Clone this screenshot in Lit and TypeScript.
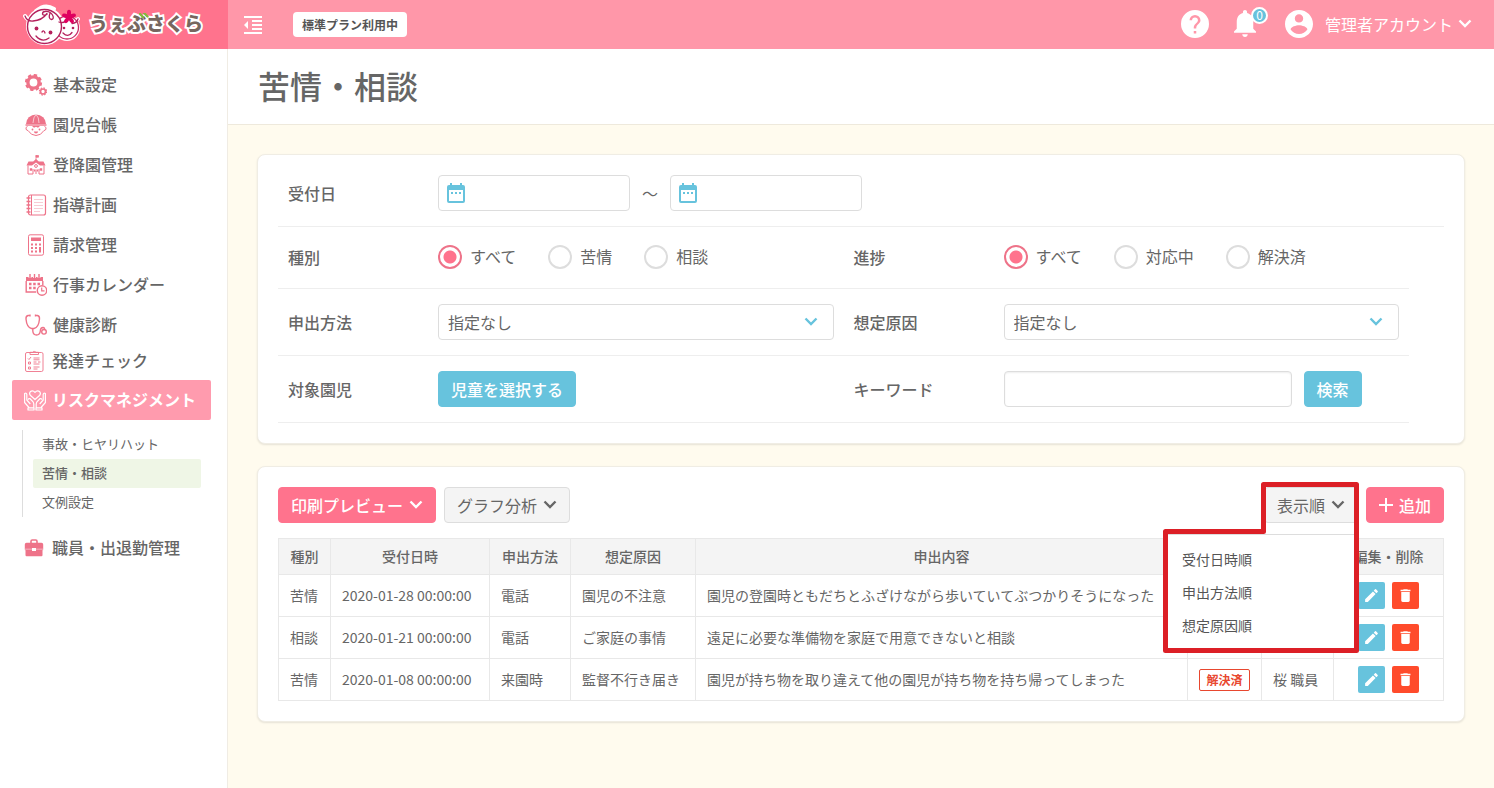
import { LitElement, html, css, svg, nothing } from "lit";
import { customElement, property } from "lit/decorators.js";
import { classMap } from "lit/directives/class-map.js";

const chevron = html`<svg class="chevron" viewBox="0 0 14 10" aria-hidden="true"><path d="M1.500 1.500l5.500 5.500L12.500 1.500" fill="none" stroke="currentColor" stroke-width="2.400"/></svg>`;

const art: Record<string, unknown> = {
  gears: svg`<g fill="none" stroke="currentColor"><circle cx="8.500" cy="8.500" r="5.600" stroke-width="3.400"/><circle cx="8.500" cy="8.500" r="7.600" stroke-width="2" stroke-dasharray="3.400 2.570"/><circle cx="18" cy="17.500" r="2.500" stroke-width="1.700"/><circle cx="18" cy="17.500" r="3.600" stroke-width="1.200" stroke-dasharray="1.500 1.330"/></g>`,
  child: svg`<path d="M1 10a10 9.500 0 0 1 20 0z" fill="currentColor"/><path d="M8 9q.3-6 3-8.500Q14 3 14 9" fill="none" stroke="#fff" stroke-width=".6"/><path d="M.5 11h21" stroke="currentColor" stroke-width="1.400"/><path d="M2.500 12.500q-2 .5-1.500 2.500.5 1.500 2 1.500Q6 21.500 11 21.500t8-5q1.500 0 2-1.500.5-2-1.500-2.500" fill="none" stroke="currentColor"/><path d="M7 12h8l-2 1.800-2-1-2 1z" fill="currentColor"/><circle cx="7.500" cy="15.500" r=".9" fill="currentColor"/><circle cx="14.500" cy="15.500" r=".9" fill="currentColor"/><path d="M8.800 17.500h4.400q-.5 2-2.200 2t-2.200-2z" fill="currentColor"/>`,
  school: svg`<path d="M11 1v5M11 1.500h2.500v1.700H11z" stroke="currentColor" fill="currentColor" stroke-width=".8"/><path d="M3.500 7.500h4.700L11 5l2.800 2.500h4.700l2 4h-5.500L11 8.500 7 11.500H1.500z" fill="currentColor"/><g fill="none" stroke="currentColor"><path d="M3 11.500v8.500h5M19 11.500v8.500h-5M8 20v-5M14 20v-5M11 15.500V20"/><circle cx="11" cy="12" r="1.400"/></g><path d="M4.800 14.200h2.400v2.600H4.800zM14.800 14.200h2.400v2.600h-2.400zM9 15.500h1.300v2H9zM11.800 15.500h1.300v2h-1.300z" fill="currentColor"/>`,
  notebook: svg`<rect x="3.500" y="1" width="17" height="20" rx="2" fill="none" stroke="currentColor" stroke-width="1.200"/><path d="M6.500 1v20" stroke="currentColor"/><path d="M1.500 4h4M1.500 7.500h4M1.500 11h4M1.500 14.500h4M1.500 18h4" stroke="currentColor" stroke-width="1.300"/><path d="M9 5.500h9M9 8.500h9M9 11.500h9M9 14.500h9M9 17.500h6" stroke="currentColor" opacity=".45" stroke-width=".8"/>`,
  calculator: svg`<rect x="3.500" y=".8" width="15" height="20.400" rx="1.600" fill="none" stroke="currentColor" stroke-width="1"/><path d="M6 3.500h10v3.500H6z" fill="currentColor"/><path d="M6 10.500h2M10 10.500h2M14 10.500h2M6 14h2M10 14h2M6 17.500h2M10 17.500h2" stroke="currentColor" stroke-width="1.800"/><path d="M14 13h2v5.500h-2z" fill="currentColor"/>`,
  calendar: svg`<path d="M1 3h17v4H1z" fill="currentColor"/><path d="M1.200 7v11h10M17.800 7v4" fill="none" stroke="currentColor" stroke-width="1.400"/><path d="M5 0v4M9.500 0v4M14 0v4" stroke="#fff" stroke-width="2.800"/><path d="M5 0v4M9.500 0v4M14 0v4" stroke="currentColor" stroke-width="1.400"/><path d="M4 10h2.500M8.200 10h2.500M12.500 10H15M4 14h2.500M8.200 14h2.500" stroke="currentColor" stroke-width="2.400"/><circle cx="17" cy="16.500" r="4.700" fill="#fff" stroke="currentColor" stroke-width="1.400"/><path d="M16.700 13.500v3.300h2.800" fill="none" stroke="currentColor" stroke-width="1.200"/>`,
  stethoscope: svg`<g fill="none" stroke="currentColor" stroke-width="1.400"><path d="M5 1.500H3Q.8 2 1 5q.8 8.500 5.500 9.500h2.500q4.700-1 5.500-9.500.2-3-2-3.500h-2M5 .5v2M10.500 .5v2"/><path d="M7.800 14.500v2.500q.3 4 3.700 4t3.800-4q.2-3.500 2.700-3.500 2 .2 1.500 2"/><circle cx="19" cy="17.800" r="2.300"/></g>`,
  checklist: svg`<g fill="none" stroke="currentColor" stroke-width=".9"><rect x="1.500" y="2.500" width="17.500" height="19" rx="1.500"/><path d="M6 4.500h8.500V2.300H12a2 1.700 0 0 0-3.500 0H6z"/><path d="M4 8.500l1 1 2-2.500M4.500 12h2v2h-2zM4.500 17h2v2h-2z"/><path d="M9.500 8h6M9.500 9.800h6M9.500 12h3M14 12h2.500M9.500 14h6M9.500 17h6M9.500 19h4"/></g>`,
  hands: svg`<g fill="none" stroke="currentColor" stroke-width="1.200" stroke-linejoin="round"><path d="M11 10.500L6.500 6.500q-1.800-2.200 0-4Q8.800 .8 11 3.300 13.200 .8 15.500 2.500q1.800 1.800 0 4z"/><path d="M5 18.500l-4.400-5V4.500q1.800-1 2.200.8V11l3.500 4M9.800 19v-4q-.2-2-1.500-3L5.800 9.500q-1.600-.2-1.500 1.300M17 18.500l4.400-5V4.500q-1.800-1-2.200.8V11l-3.500 4M12.200 19v-4q.2-2 1.500-3l2.500-2.500q1.600-.2 1.500 1.300M4 18.800h6v2.200H4zM12 18.800h6v2.200h-6z"/></g>`,
  briefcase: svg`<path d="M7 6V4.200q0-1.200 1.200-1.200h3.600q1.200 0 1.200 1.200V6" fill="none" stroke="currentColor" stroke-width="1.600"/><path d="M2.500 5.800h15q1.700 0 1.700 1.700v4.300H.8V7.500q0-1.700 1.700-1.700zM1.500 13h17V18q0 1.200-1 1.200h-15q-1 0-1-1.200z" fill="currentColor"/><path d="M.8 11.500h18.400v1.700H.8z" fill="currentColor" opacity=".7"/><path d="M8 11h4v3H8z" fill="#fff"/>`,
};

const base = css`
  :host { font-family: "Noto Sans CJK JP", sans-serif; color: #666; font-size: 16px; line-height: 24px; }
  *, *::before, *::after { box-sizing: border-box; }
  svg { display: block; flex: none; }
  button, input, select { font: inherit; color: inherit; margin: 0; }
  a { color: inherit; text-decoration: none; }
  .chevron { width: 14px; height: 10px; }
`;

@customElement("app-header")
class AppHeader extends LitElement {
  static styles = [base, css`
    :host { display: block; }
    header { display: flex; height: 49px; background: #ff97a9; color: #fff; }
    .brand { display: flex; align-items: center; gap: 8px; width: 228px; padding-left: 22px; background: #ff738d; }
    .face { width: 59px; height: 42px; }
    .name { position: relative; padding-bottom: 4px; font-size: 19px; font-weight: 900; color: #77665f; -webkit-text-stroke: 4px #fff; paint-order: stroke fill; }
    .leaf { position: absolute; left: 50px; top: 2px; }
    .bar { flex: 1; display: flex; align-items: center; padding: 0 22px 0 13px; }
    .icon { display: flex; padding: 0; border: 0; background: none; color: #fff; cursor: pointer; }
    .plan { margin-left: 28px; padding: 0 9px; border-radius: 4px; background: #fff; color: #555; font-size: 12px; font-weight: 700; line-height: 25px; }
    .right { display: flex; align-items: center; margin-left: auto; padding-bottom: 2px; }
    .bell { position: relative; margin: 0 29px 0 25px; }
    .count { position: absolute; left: 17px; top: -3px; width: 17px; height: 17px; border: 2px solid #fff; border-radius: 50%; background: #67c2dc; font-size: 12px; line-height: 12px; text-align: center; }
    .account { display: flex; align-items: center; gap: 12px; padding: 0; border: 0; background: none; color: #fff; cursor: pointer; }
    .user { display: flex; align-items: center; gap: 5px; }
  `];
  render() {
    return html`<header>
      <a class="brand" href="#">
        <svg class="face" viewBox="0 0 59 42" aria-hidden="true">
          <g stroke="#fff" stroke-width="4" stroke-linecap="round" fill="#fff"><circle cx="23" cy="22" r="17"/><circle cx="45" cy="24" r="11"/><path d="M3 12q2 4 6 4M56 15l-4 3M14 7Q23-1 32 5" fill="none"/></g>
          <circle cx="45" cy="23.500" r="11.500" fill="#fff" stroke="#c92b68" stroke-width="1.300"/>
          <circle cx="22.500" cy="22.500" r="17" fill="#fff" stroke="#b4215c" stroke-width="1.400"/>
          <path d="M3 12q2 5.500 8 5 9-.5 14-7.500M28 9q-2 6 1.500 6.500 3-.5 1-4.500-2.500-4-7.500-3.500-2.500 0-2.500 2.500.5 2 4.500.5M56 15q-1 4-6 4.500M37 18q4 2 8-2" fill="none" stroke="#b4215c" stroke-width="1.300" stroke-linecap="round"/>
          <g fill="#b4215c"><circle cx="14.500" cy="24.500" r="1.900"/><circle cx="28.500" cy="28.500" r="1.900"/><circle cx="42" cy="24" r="1.300"/><circle cx="51" cy="24" r="1.300"/></g>
          <path d="M20 28q2-2.500 3 1M14 32q6 7 13 2M41 29q5 5 9-.5" fill="none" stroke="#b4215c" stroke-width="1.300" stroke-linecap="round"/>
          <g fill="#df005f"><circle cx="47" cy="13" r="3"/><ellipse cx="47" cy="9" rx="2" ry="3.200"/><ellipse cx="47" cy="9" rx="2" ry="3.200" transform="rotate(72 47 13)"/><ellipse cx="47" cy="9" rx="2" ry="3.200" transform="rotate(144 47 13)"/><ellipse cx="47" cy="9" rx="2" ry="3.200" transform="rotate(216 47 13)"/><ellipse cx="47" cy="9" rx="2" ry="3.200" transform="rotate(288 47 13)"/></g>
        </svg>
        <span class="name">うぇぶさくら<svg class="leaf" width="10" height="6" viewBox="0 0 10 6" aria-hidden="true"><path d="M1 1l3 3M5 0l3.500 3.500" stroke="#83b93c" stroke-width="2.400" stroke-linecap="round"/></svg></span>
      </a>
      <div class="bar">
        <button class="icon" aria-label="メニューを閉じる"><svg width="24" height="24" viewBox="0 0 24 24" fill="currentColor"><path d="M11 17h10v-2H11v2zm-8-5l4 4V8l-4 4zm0 9h18v-2H3v2zM3 3v2h18V3H3zm8 6h10V7H11v2zm0 4h10v-2H11v2z"/></svg></button>
        <span class="plan">標準プラン利用中</span>
        <div class="right">
          <button class="icon" aria-label="ヘルプ"><svg width="28" height="28" viewBox="2 2 20 20" fill="currentColor"><path d="M12 2a10 10 0 1 0 0 20 10 10 0 0 0 0-20zm.9 16.800h-1.800V17h1.800v1.800zm1.900-7.100l-.9.900c-.7.700-1 1.300-1 2.700h-1.800v-.5c0-1.100.4-2.100 1.200-2.800l1.200-1.300c.4-.3.600-.8.600-1.300a2.100 2.100 0 0 0-4.200 0H8.100a3.900 3.900 0 0 1 7.800 0c0 .9-.4 1.700-1.100 2.300z"/></svg></button>
          <button class="icon bell" aria-label="お知らせ"><svg width="22" height="27" viewBox="4 2.500 16 19.500" fill="currentColor"><path d="M12 22c1.100 0 2-.9 2-2h-4c0 1.100.9 2 2 2zm6-6v-5c0-3.070-1.640-5.640-4.500-6.320V4c0-.83-.67-1.500-1.500-1.500s-1.500.67-1.500 1.500v.68C7.630 5.360 6 7.920 6 11v5l-2 2v1h16v-1l-2-2z"/></svg><span class="count">0</span></button>
          <button class="account">
            <svg width="28" height="28" viewBox="2 2 20 20" fill="currentColor"><path d="M12 2C6.480 2 2 6.480 2 12s4.480 10 10 10 10-4.480 10-10S17.520 2 12 2zm0 3c1.660 0 3 1.340 3 3s-1.340 3-3 3-3-1.340-3-3 1.340-3 3-3zm0 14.200c-2.500 0-4.710-1.280-6-3.220.03-1.990 4-3.080 6-3.080 1.990 0 5.970 1.090 6 3.080-1.290 1.940-3.500 3.220-6 3.220z"/></svg>
            <span class="user">管理者アカウント${chevron}</span>
          </button>
        </div>
      </div>
    </header>`;
  }
}

@customElement("app-sidebar")
class AppSidebar extends LitElement {
  static styles = [base, css`
    :host { display: block; width: 228px; flex: none; background: #fff; border-right: 1px solid #f0ece4; }
    nav { padding: 16px 16px 16px 12px; }
    ul { list-style: none; margin: 0; padding: 0; }
    .item { display: flex; align-items: center; gap: 6px; height: 40px; padding-left: 13px; font-weight: 500; border-radius: 2px; white-space: nowrap; }
    .item span { padding-bottom: 2px; }
    .item svg { width: 22px; height: 22px; color: #ee7389; }
    .compact { height: 32px; margin-bottom: 3px; }
    .active { background: #ff9bae; color: #fff; font-weight: 700; }
    .compact, .active, .last { padding-left: 12px; }
    .item.active svg { color: #fff; }
    .sub { margin: 10px 10px 11px 10px; padding-left: 10px; border-left: 1px solid #ddd; font-size: 13px; }
    .sub a { display: block; padding: 0 0 2px 9px; line-height: 27px; border-radius: 2px; }
    .sub .current { background: #eff6e6; font-weight: 500; }
  `];
  private items = [
    ["gears", "基本設定"], ["child", "園児台帳"], ["school", "登降園管理"], ["notebook", "指導計画"],
    ["calculator", "請求管理"], ["calendar", "行事カレンダー"], ["stethoscope", "健康診断"],
    ["checklist", "発達チェック"], ["hands", "リスクマネジメント"], ["briefcase", "職員・出退勤管理"],
  ];
  render() {
    return html`<nav><ul>${this.items.map(([icon, label]) => html`<li>
      <a href="#" class=${classMap({ item: true, compact: icon === "checklist", active: icon === "hands", last: icon === "briefcase" })}>
        <svg viewBox="0 0 22 22" aria-hidden="true">${art[icon]}</svg><span>${label}</span></a>
      ${icon === "hands" ? html`<ul class="sub">
        <li><a href="#">事故・ヒヤリハット</a></li>
        <li><a href="#" class="current">苦情・相談</a></li>
        <li><a href="#">文例設定</a></li></ul>` : nothing}
    </li>`)}</ul></nav>`;
  }
}

const control = css`
  .btn { display: inline-flex; align-items: center; gap: 6px; height: 36px; padding: 0 12px; border: 1px solid #ddd; border-radius: 4px; background: #f4f4f4; white-space: nowrap; cursor: pointer; }
  .blue { background: #67c3dd; border-color: #67c3dd; color: #fff; font-weight: 500; }
  .pink { background: #ff738d; border-color: #ff738d; color: #fff; font-weight: 500; }
  .card { background: #fff; border: 1px solid #f0ede4; border-radius: 8px; box-shadow: 0 1px 2px #0000001a; }
`;

@customElement("radio-group")
class RadioGroup extends LitElement {
  @property() name = "";
  @property({ attribute: false }) options: string[] = [];
  static styles = [base, css`
    :host { display: flex; gap: 32px; }
    label { display: flex; align-items: center; gap: 8px; white-space: nowrap; }
    span { padding-bottom: 2px; }
    input { appearance: none; width: 24px; height: 24px; border: 2px solid #ddd; border-radius: 50%; background: #fff; }
    input:checked { border-color: #ee7389; background: radial-gradient(circle, #ff738d 6px, #fff 7px); }
  `];
  render() {
    return html`${this.options.map((o, i) => html`<label><input type="radio" name=${this.name} .checked=${i === 0}><span>${o}</span></label>`)}`;
  }
}

@customElement("search-panel")
class SearchPanel extends LitElement {
  static styles = [base, control, css`
    :host { display: block; }
    .card { padding: 5px 20px 20px; }
    .row { display: grid; grid-template-columns: 1fr 1fr; align-items: center; padding: 15px 0; border-bottom: 1px solid #eee; }
    .pair { width: 97%; }
    .radios { padding: 17px 0 18px; }
    .field { display: flex; align-items: center; padding: 0 10px; }
    .label { width: 150px; flex: none; font-weight: 500; }
    .control { flex: 1; display: flex; align-items: center; gap: 12px; }
    .text { height: 36px; border: 1px solid #ddd; border-radius: 4px; background: #fff; padding: 0 9px; }
    .date { display: grid; align-items: center; width: 192px; flex: none; }
    .date > * { grid-area: 1 / 1; }
    .date .text { width: 100%; padding-left: 36px; }
    .date svg { z-index: 1; margin-left: 9px; color: #67c3dd; }
    .keyword { width: 288px; min-width: 0; box-shadow: inset 0 1px 2px #00000012; }
    .select { flex: 1; display: grid; align-items: center; }
    .select > * { grid-area: 1 / 1; }
    .select select { appearance: none; width: 100%; }
    .select .chevron { justify-self: end; margin-right: 16px; color: #67c3dd; pointer-events: none; }
  `];
  private date(label: string) {
    return html`<span class="date"><input class="text" type="text" aria-label=${label}><svg width="18" height="20" viewBox="0 0 18 20" aria-hidden="true"><path d="M2 2h1V0h2v2h8V0h2v2h1q2 0 2 2v14q0 2-2 2H2q-2 0-2-2V4q0-2 2-2zm0 5v11h14V7zM4 9h2v2H4zm4 0h2v2H8zm4 0h2v2h-2z" fill="currentColor" fill-rule="evenodd"/></svg></span>`;
  }
  private select(id: string, label: string) {
    return html`<div class="field"><label class="label" for=${id}>${label}</label><span class="select"><select class="text" id=${id}><option>指定なし</option></select>${chevron}</span></div>`;
  }
  render() {
    return html`<form class="card" @submit=${(e: Event) => e.preventDefault()}>
      <div class="row"><div class="field"><span class="label">受付日</span><span class="control">${this.date("受付日 開始")}<span>～</span>${this.date("受付日 終了")}</span></div></div>
      <div class="row pair radios">
        <div class="field"><span class="label">種別</span><radio-group name="kind" .options=${["すべて", "苦情", "相談"]}></radio-group></div>
        <div class="field"><span class="label">進捗</span><radio-group name="progress" .options=${["すべて", "対応中", "解決済"]}></radio-group></div>
      </div>
      <div class="row pair">${this.select("method", "申出方法")}${this.select("cause", "想定原因")}</div>
      <div class="row pair">
        <div class="field"><span class="label">対象園児</span><button type="button" class="btn blue">児童を選択する</button></div>
        <div class="field"><label class="label" for="keyword">キーワード</label><span class="control"><input class="text keyword" id="keyword" type="text"><button class="btn blue">検索</button></span></div>
      </div>
    </form>`;
  }
}

@customElement("record-list")
class RecordList extends LitElement {
  static styles = [base, control, css`
    :host { display: block; }
    .card { padding: 20px 20px 20px; }
    .tools { display: flex; gap: 8px; margin-bottom: 15px; }
    .sort { position: relative; margin-left: auto; }
    .menu { position: absolute; z-index: 1; top: 47px; right: 0; width: 190px; margin: 0; padding: 8px 0 7px; list-style: none; background: #fff; border-top: 1px solid #ddd; font-size: 14px; }
    .menu a { display: block; padding: 0 14px; line-height: 33px; color: #555; }
    .outline { position: absolute; z-index: 2; top: -5px; right: -1px; pointer-events: none; }
    table { width: 100%; table-layout: fixed; border-collapse: collapse; font-size: 14px; line-height: 20px; white-space: nowrap; }
    th, td { border: 1px solid #e8e8e8; padding: 0 11px 2px; }
    th { height: 36px; background: #f4f4f4; font-weight: 500; }
    td { height: 42px; }
    .tool { padding-bottom: 0; }
    .w-kind { width: 52px; } .w-date { width: 159px; } .w-method { width: 81px; } .w-cause { width: 125px; }
    .w-state { width: 74px; } .w-staff { width: 72px; } .w-edit { width: 110px; }
    .state { display: block; border: 1px solid #e8472f; border-radius: 2px; color: #e8472f; font-size: 12px; font-weight: 700; text-align: center; }
    .actions { display: flex; justify-content: center; gap: 7px; }
    .act { display: grid; place-items: center; width: 27px; height: 27px; padding: 0; border: 0; border-radius: 2px; background: #67c3dd; color: #fff; cursor: pointer; }
    .del { background: #ff4b2b; }
  `];
  private rows = [
    ["苦情", "2020-01-28 00:00:00", "電話", "園児の不注意", "園児の登園時ともだちとふざけながら歩いていてぶつかりそうになった", "", ""],
    ["相談", "2020-01-21 00:00:00", "電話", "ご家庭の事情", "遠足に必要な準備物を家庭で用意できないと相談", "", ""],
    ["苦情", "2020-01-08 00:00:00", "来園時", "監督不行き届き", "園児が持ち物を取り違えて他の園児が持ち物を持ち帰ってしまった", "解決済", "桜 職員"],
  ];
  render() {
    return html`<section class="card">
      <div class="tools">
        <button class="btn pink">印刷プレビュー${chevron}</button>
        <button class="btn">グラフ分析${chevron}</button>
        <div class="sort">
          <button class="btn" aria-expanded="true">表示順${chevron}</button>
          <ul class="menu"><li><a href="#">受付日時順</a></li><li><a href="#">申出方法順</a></li><li><a href="#">想定原因順</a></li></ul>
          <svg class="outline" width="196" height="171" viewBox="0 0 196 171" aria-hidden="true"><path d="M100.500 2.500h93v166h-191v-119h98z" fill="none" stroke="#dc1f26" stroke-width="5" stroke-linejoin="round"/></svg>
        </div>
        <button class="btn pink"><svg width="14" height="14" viewBox="0 0 14 14" aria-hidden="true"><path d="M7 0v14M0 7h14" stroke="currentColor" stroke-width="2"/></svg>追加</button>
      </div>
      <table>
        <colgroup><col class="w-kind"><col class="w-date"><col class="w-method"><col class="w-cause"><col><col class="w-state"><col class="w-staff"><col class="w-edit"></colgroup>
        <thead><tr><th>種別</th><th>受付日時</th><th>申出方法</th><th>想定原因</th><th>申出内容</th><th></th><th></th><th>編集・削除</th></tr></thead>
        <tbody>${this.rows.map(r => html`<tr>
          <td>${r[0]}</td><td>${r[1]}</td><td>${r[2]}</td><td>${r[3]}</td><td>${r[4]}</td>
          <td class="tool">${r[5] ? html`<span class="state">${r[5]}</span>` : nothing}</td><td>${r[6]}</td>
          <td class="tool"><div class="actions">
            <button class="act" aria-label="編集"><svg width="17" height="17" viewBox="0 0 24 24" fill="currentColor"><path d="M3 17.250V21h3.750L17.810 9.940l-3.750-3.750L3 17.250zM20.710 7.040a1 1 0 0 0 0-1.410l-2.340-2.340a1 1 0 0 0-1.410 0l-1.830 1.830 3.750 3.750 1.830-1.830z"/></svg></button>
            <button class="act del" aria-label="削除"><svg width="17" height="17" viewBox="0 0 24 24" fill="currentColor"><path d="M6 19c0 1.100.9 2 2 2h8c1.100 0 2-.9 2-2V7H6v12zM19 4h-3.500l-1-1h-5l-1 1H5v2h14V4z"/></svg></button>
          </div></td></tr>`)}</tbody>
      </table>
    </section>`;
  }
}

@customElement("app-root")
class AppRoot extends LitElement {
  static styles = [base, css`
    :host { display: flex; flex-direction: column; min-height: 100vh; background: #fffbee; }
    .body { flex: 1; display: flex; }
    main { flex: 1; min-width: 0; }
    .title { margin: 0; padding: 12px 30px 15px; background: #fff; border-bottom: 1px solid #eee9dc; font-size: 32px; font-weight: 500; line-height: 48px; }
    .content { display: grid; gap: 22px; padding: 29px; }
  `];
  render() {
    return html`<app-header></app-header>
      <div class="body"><app-sidebar></app-sidebar>
        <main><h1 class="title">苦情・相談</h1><div class="content"><search-panel></search-panel><record-list></record-list></div></main>
      </div>`;
  }
}
